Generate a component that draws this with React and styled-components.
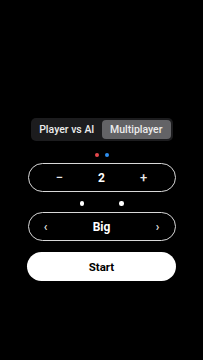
import React, { useState } from "react";
import styled, { createGlobalStyle } from "styled-components";

const Global = createGlobalStyle`
  html, body { margin: 0; padding: 0; background: #000; }
  body { font-family: Roboto, "Noto Sans", sans-serif; -webkit-font-smoothing: antialiased; }
`;

const Screen = styled.div`
  width: 203px;
  height: 360px;
  background: #000;
  display: flex;
  flex-direction: column;
  align-items: center;
  padding-top: 118px;
  box-sizing: border-box;
`;

const Segmented = styled.div`
  width: 142px;
  height: 23px;
  box-sizing: border-box;
  background: #1c1c1e;
  border-radius: 5px;
  padding: 2px;
  display: grid;
  grid-template-columns: 1fr 1fr;
  gap: 1px;
`;

const Segment = styled.button`
  border: none;
  margin: 0;
  padding: 0;
  border-radius: 4px;
  background: ${(p) => (p.$active ? "#636366" : "transparent")};
  color: #ececec;
  font-family: Roboto, sans-serif;
  font-size: 10.5px;
  font-weight: 500;
  line-height: 19px;
  cursor: pointer;
`;

const DotRow = styled.div`
  display: flex;
  justify-content: center;
  gap: ${(p) => p.$gap}px;
  margin-top: ${(p) => p.$top}px;
  height: 5px;
  align-items: center;
`;

const Dot = styled.span`
  width: ${(p) => p.$size}px;
  height: ${(p) => p.$size}px;
  border-radius: 50%;
  background: ${(p) => p.$color};
`;

const Pill = styled.div`
  width: 148px;
  height: 29px;
  box-sizing: border-box;
  border: 1.5px solid #d8d8d8;
  border-radius: 15px;
  display: flex;
  align-items: center;
  justify-content: space-between;
  padding: 0 ${(p) => p.$pad}px;
  margin-top: ${(p) => p.$top}px;
  color: #fff;
`;

const SideBtn = styled.span`
  width: 12px;
  text-align: center;
  font-size: ${(p) => p.$size}px;
  font-weight: 500;
  color: #e8e8e8;
  line-height: 1;
`;

const Value = styled.span`
  font-size: 12px;
  font-weight: 700;
  color: #fff;
`;

const StartButton = styled.button`
  width: 149px;
  height: 29px;
  border: none;
  border-radius: 15px;
  background: #fff;
  color: #000;
  font-family: Roboto, sans-serif;
  font-size: 11.5px;
  font-weight: 700;
  margin-top: 11px;
  padding: 0;
`;

export default function App() {
  const [mode, setMode] = useState(1);
  return (
    <>
      <Global />
      <Screen>
        <Segmented>
          <Segment $active={mode === 0} onClick={() => setMode(0)}>Player vs AI</Segment>
          <Segment $active={mode === 1} onClick={() => setMode(1)}>Multiplayer</Segment>
        </Segmented>
        <DotRow $gap={6} $top={11}>
          <Dot $size={4} $color="#e5484d" />
          <Dot $size={4} $color="#2f8fef" />
        </DotRow>
        <Pill $pad={25} $top={6}>
          <SideBtn $size={13}>−</SideBtn>
          <Value>2</Value>
          <SideBtn $size={13}>+</SideBtn>
        </Pill>
        <DotRow $gap={35} $top={9}>
          <Dot $size={4.5} $color="#fff" />
          <Dot $size={4.5} $color="#fff" />
        </DotRow>
        <Pill $pad={11} $top={6}>
          <SideBtn $size={12}>‹</SideBtn>
          <Value>Big</Value>
          <SideBtn $size={12}>›</SideBtn>
        </Pill>
        <StartButton>Start</StartButton>
      </Screen>
    </>
  );
}
